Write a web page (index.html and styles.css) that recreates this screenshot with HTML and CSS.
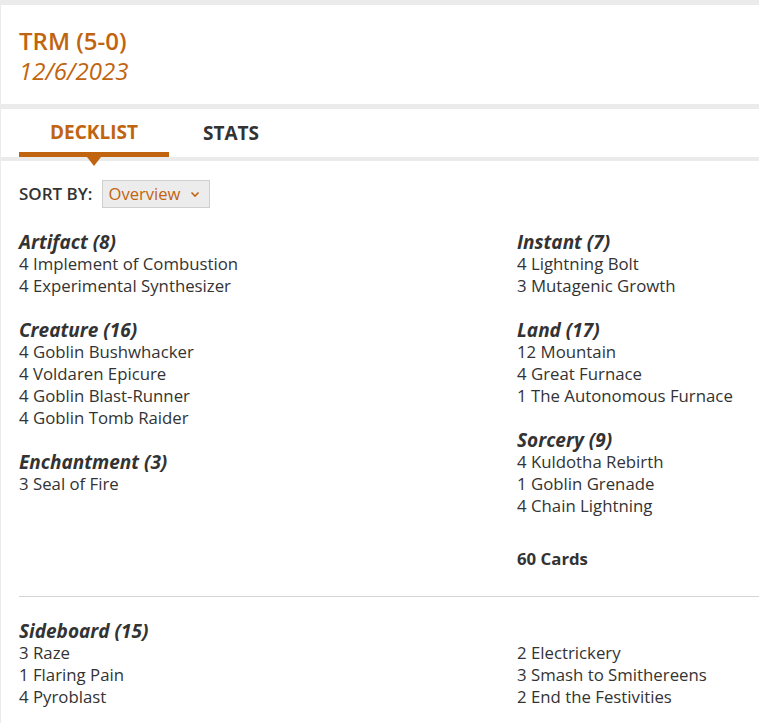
FILE: index.html
```html
<!DOCTYPE html>
<html>
<head>
<meta charset="utf-8">
<link rel="stylesheet" href="styles.css">
</head>
<body>
<div class="page">
  <div class="header">
    <div class="title">TRM (5-0)</div>
    <div class="date">12/6/2023</div>
  </div>
  <div class="tabs">
    <div class="tab active">DECKLIST<span class="caret"></span></div>
    <div class="tab">STATS</div>
  </div>
  <div class="content">
    <div class="sort">
      <span class="sort-label">SORT BY:</span>
      <span class="select">Overview
        <svg class="chev" width="10" height="7" viewBox="0 0 10 7"><path d="M1.5 1.5 L5 5 L8.5 1.5" fill="none" stroke="#c1640f" stroke-width="1.6"/></svg>
      </span>
    </div>
    <div class="main">
      <div class="col">
        <div class="group">
          <div class="head">Artifact (8)</div>
          <div>4 Implement of Combustion</div>
          <div>4 Experimental Synthesizer</div>
        </div>
        <div class="group">
          <div class="head">Creature (16)</div>
          <div>4 Goblin Bushwhacker</div>
          <div>4 Voldaren Epicure</div>
          <div>4 Goblin Blast-Runner</div>
          <div>4 Goblin Tomb Raider</div>
        </div>
        <div class="group">
          <div class="head">Enchantment (3)</div>
          <div>3 Seal of Fire</div>
        </div>
      </div>
      <div class="col">
        <div class="group">
          <div class="head">Instant (7)</div>
          <div>4 Lightning Bolt</div>
          <div>3 Mutagenic Growth</div>
        </div>
        <div class="group">
          <div class="head">Land (17)</div>
          <div>12 Mountain</div>
          <div>4 Great Furnace</div>
          <div>1 The Autonomous Furnace</div>
        </div>
        <div class="group">
          <div class="head">Sorcery (9)</div>
          <div>4 Kuldotha Rebirth</div>
          <div>1 Goblin Grenade</div>
          <div>4 Chain Lightning</div>
        </div>
        <div class="total">60 Cards</div>
      </div>
    </div>
    <hr class="divider">
    <div class="side">
      <div class="col">
        <div class="head">Sideboard (15)</div>
        <div>3 Raze</div>
        <div>1 Flaring Pain</div>
        <div>4 Pyroblast</div>
      </div>
      <div class="col">
        <div class="head blank"></div>
        <div>2 Electrickery</div>
        <div>3 Smash to Smithereens</div>
        <div>2 End the Festivities</div>
      </div>
    </div>
  </div>
</div>
</body>
</html>
```

FILE: styles.css
```css
html, body {
  margin: 0;
  padding: 0;
}
body {
  background: #ebebeb;
  font-family: "Open Sans", "Liberation Sans", sans-serif;
  color: #333;
}
.page {
  padding: 5px 0 0 1px;
}
.header {
  background: #fff;
  padding: 21px 18px 18px;
  margin-bottom: 5px;
  color: #c1640f;
  font-size: 24px;
  line-height: 30px;
}
.title {
  font-weight: 600;
}
.date {
  font-style: italic;
}
.tabs {
  background: #fff;
  height: 48px;
  display: flex;
  padding-left: 18px;
  gap: 3px;
  margin-bottom: 4px;
}
.tab {
  position: relative;
  padding: 0 31px;
  font-size: 19px;
  font-weight: 700;
  line-height: 48px;
  color: #333;
  box-sizing: border-box;
  height: 48px;
}
.tab.active {
  color: #c1640f;
  border-bottom: 5px solid #c1640f;
  line-height: 46px;
}
.caret {
  position: absolute;
  left: 50%;
  bottom: -14px;
  margin-left: -7px;
  width: 0;
  height: 0;
  border-left: 7px solid transparent;
  border-right: 7px solid transparent;
  border-top: 9px solid #c1640f;
}
.content {
  background: #fff;
  padding: 18px 0 40px 18px;
  font-size: 16.8px;
  line-height: 22px;
}
.sort {
  display: flex;
  align-items: center;
  gap: 9px;
  height: 28px;
  margin-top: 1px;
}
.sort-label {
  font-weight: 600;
  font-size: 17px;
}
.select {
  display: inline-flex;
  align-items: center;
  height: 28px;
  box-sizing: border-box;
  border: 1px solid #cfcfcf;
  background: #ececec;
  color: #c1640f;
  padding: 0 9px 0 6px;
  font-size: 16.6px;
}
.chev {
  margin-left: 10px;
}
.main {
  display: grid;
  grid-template-columns: 498px 1fr;
  margin-top: 24px;
}
.group + .group {
  margin-top: 23px;
}
.head {
  font-weight: 700;
  font-style: italic;
  font-size: 19px;
  line-height: 21px;
}
.head.blank {
  height: 21px;
}
.total {
  font-weight: 700;
  margin-top: 31px;
}
.divider {
  border: 0;
  border-top: 1px solid #d4d4d4;
  margin: 26px 0 24px;
}
.side {
  display: grid;
  grid-template-columns: 498px 1fr;
}
```
